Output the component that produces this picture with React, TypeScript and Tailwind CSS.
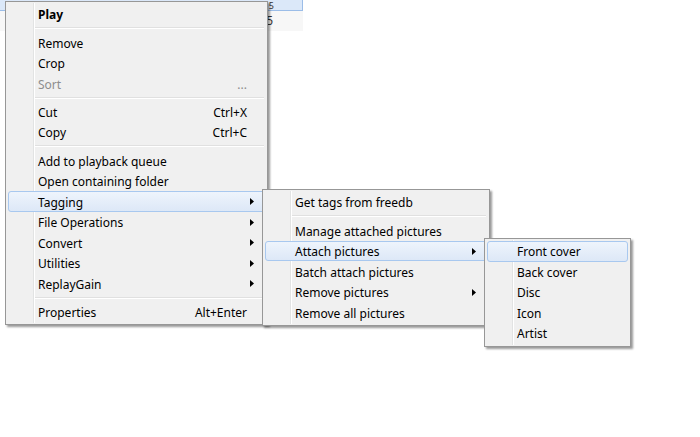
import React from "react";

type Item =
  | { sep: true }
  | { sep?: false; label: string; shortcut?: string; sub?: boolean; bold?: boolean; disabled?: boolean; hi?: boolean };

const Arrow = () => (
  <svg width="4" height="7" viewBox="0 0 4 7" className="block">
    <path d="M0 0 L4 3.5 L0 7 Z" fill="#000" />
  </svg>
);

function Menu({ items, className }: { items: Item[]; className: string }) {
  return (
    <div
      className={
        "absolute border border-[#979797] bg-[#f0f0f0] py-[2px] shadow-[2px_2px_2px_rgba(0,0,0,0.4)] " + className
      }
    >
      <div className="absolute top-[1px] bottom-[1px] left-[27px] w-[2px] border-l border-[#e2e3e3] border-r border-r-white" />
      <div className="relative flex flex-col">
        {items.map((it, i) =>
          it.sep ? (
            <div key={i} className="flex h-[7.75px] items-center pl-[29px] pr-[3px]">
              <div className="h-[2px] w-full border-t border-[#e0e0e0] border-b border-b-white" />
            </div>
          ) : (
            <div
              key={i}
              className={
                "mx-[2px] flex h-[20.5px] items-center rounded-[3px] border pl-[29px] pr-[10px] " +
                (it.hi
                  ? "border-[#a8c8ef] bg-gradient-to-b from-[#eef4fc] to-[#dde8f7]"
                  : "border-transparent")
              }
            >
              <span
                className={
                  "flex-1 translate-y-[1px] whitespace-nowrap text-[12px] leading-none " +
                  (it.bold ? "font-bold " : "") +
                  (it.disabled ? "text-[#8d8d8d]" : "text-black")
                }
              >
                {it.label}
              </span>
              {it.shortcut && (
                <span
                  className={
                    "mr-[7px] translate-y-[1px] whitespace-nowrap text-[12px] leading-none " +
                    (it.disabled ? "text-[#8d8d8d]" : "text-black")
                  }
                >
                  {it.shortcut}
                </span>
              )}
              {it.sub && <Arrow />}
            </div>
          )
        )}
      </div>
    </div>
  );
}

const menu1: Item[] = [
  { label: "Play", bold: true },
  { sep: true },
  { label: "Remove" },
  { label: "Crop" },
  { label: "Sort", shortcut: "...", disabled: true },
  { sep: true },
  { label: "Cut", shortcut: "Ctrl+X" },
  { label: "Copy", shortcut: "Ctrl+C" },
  { sep: true },
  { label: "Add to playback queue" },
  { label: "Open containing folder" },
  { label: "Tagging", sub: true, hi: true },
  { label: "File Operations", sub: true },
  { label: "Convert", sub: true },
  { label: "Utilities", sub: true },
  { label: "ReplayGain", sub: true },
  { sep: true },
  { label: "Properties", shortcut: "Alt+Enter" },
];

const menu2: Item[] = [
  { label: "Get tags from freedb" },
  { sep: true },
  { label: "Manage attached pictures" },
  { label: "Attach pictures", sub: true, hi: true },
  { label: "Batch attach pictures" },
  { label: "Remove pictures", sub: true },
  { label: "Remove all pictures" },
];

const menu3: Item[] = [
  { label: "Front cover", hi: true },
  { label: "Back cover" },
  { label: "Disc" },
  { label: "Icon" },
  { label: "Artist" },
];

export default function App() {
  return (
    <div
      className="relative h-[437px] w-[700px] overflow-hidden bg-white"
      style={{ fontFamily: '"Noto Sans", "Noto Sans CJK SC", sans-serif' }}
    >
      <div className="w-[303px]">
        <div className="flex h-[11px] items-end justify-end border-r border-b border-[#9bbde8] bg-[#dbe8f9] pr-[28px]">
          <span className="text-[9px] leading-none text-[#333]">5</span>
        </div>
        <div className="flex h-[20px] items-center justify-end bg-[#f7f7f7] pr-[30px]">
          <span className="text-[12px] leading-none text-[#333]">5</span>
        </div>
      </div>
      <Menu items={menu1} className="left-[5px] top-[1px] w-[263px]" />
      <Menu items={menu2} className="left-[262px] top-[189px] w-[228px]" />
      <Menu items={menu3} className="left-[484px] top-[238px] w-[147px]" />
    </div>
  );
}
